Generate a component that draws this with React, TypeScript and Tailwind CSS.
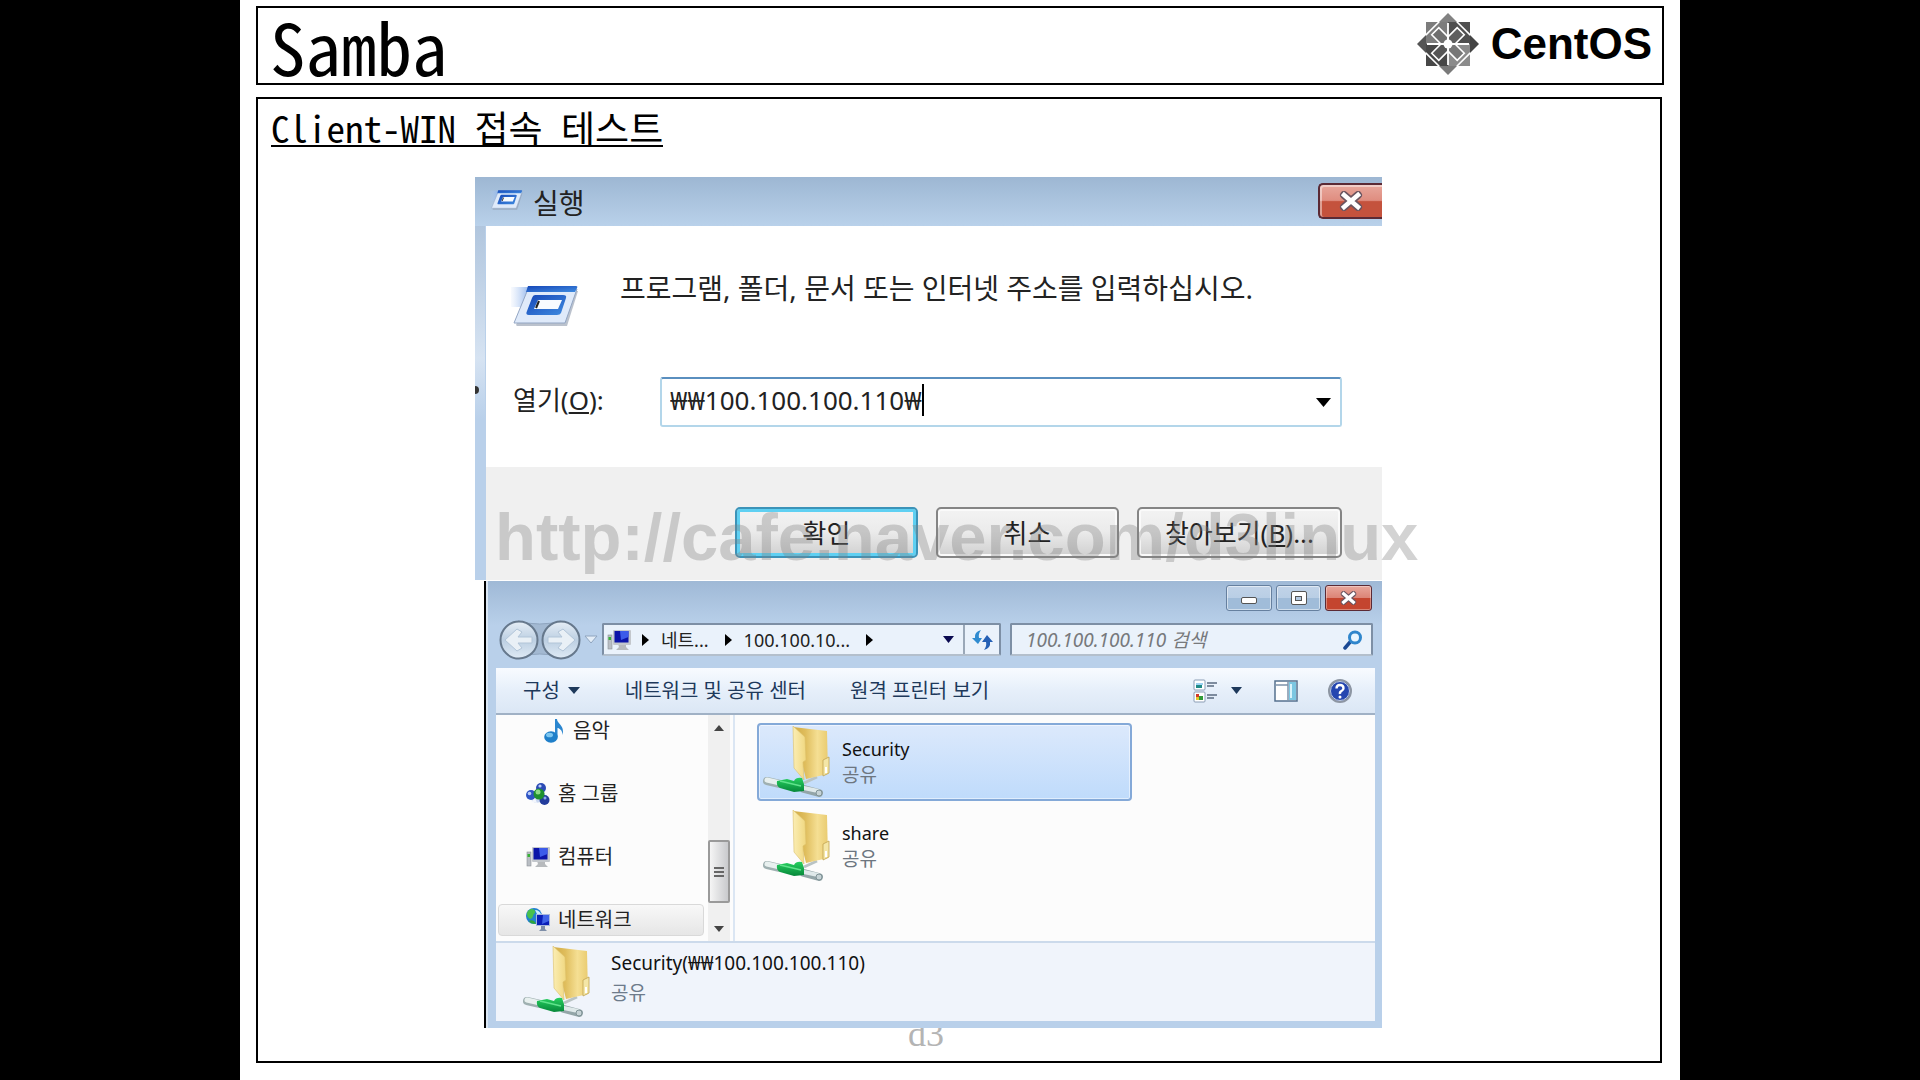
import React from "react";

const MONO = "font-['Noto_Sans_Mono_CJK_KR','Noto_Sans_CJK_KR',monospace]";
const UI = "font-['Noto_Sans','Noto_Sans_CJK_KR',sans-serif]";

function CentosMark() {
  const corners = [
    { x: -22, y: -22, fill: "#7c7c7c" },
    { x: 0, y: -22, fill: "#4f4f4f" },
    { x: 0, y: 0, fill: "#8b8b8b" },
    { x: -22, y: 0, fill: "#474747" },
  ];
  const tips = [
    { d: "M0-31L-9-22H9Z", fill: "#828282" },
    { d: "M31 0L22-9V9Z", fill: "#444444" },
    { d: "M0 31L9 22H-9Z", fill: "#7a7a7a" },
    { d: "M-31 0L-22-9V9Z", fill: "#555555" },
  ];
  const bands = [
    { angle: -45, fill: "#6f6f6f" },
    { angle: 45, fill: "#5f5f5f" },
    { angle: 135, fill: "#777777" },
    { angle: 225, fill: "#565656" },
  ];
  return (
    <svg viewBox="-31 -31 62 62" className="size-[62px]" aria-hidden="true">
      {corners.map((c) => (
        <rect key={`${c.x}${c.y}`} x={c.x} y={c.y} width="22" height="22" fill={c.fill} />
      ))}
      {tips.map((p) => (
        <path key={p.d} d={p.d} fill={p.fill} />
      ))}
      {bands.map((b) => (
        <g key={b.angle} transform={`rotate(${b.angle})`} stroke="#fff" strokeWidth="1.6">
          <path d="M-9.500-22H9.500" />
          <path d="M0 0L-5-5V-18H5V-5Z" fill={b.fill} />
        </g>
      ))}
      <path d="M-21 0H21M0-21V21" stroke="#fff" strokeWidth="1.8" />
      <circle r="4.500" fill="#fff" />
    </svg>
  );
}

function RunIcon({ className }: { className: string }) {
  return (
    <svg viewBox="0 0 68 42" className={className} aria-hidden="true">
      <defs>
        <linearGradient id="runBlue" x1="0" y1="0" x2="1" y2="1">
          <stop offset="0" stopColor="#1647b8" />
          <stop offset="1" stopColor="#3f8be0" />
        </linearGradient>
        <linearGradient id="runTrail">
          <stop offset="0" stopColor="#b9d0f5" stopOpacity="0.1" />
          <stop offset="1" stopColor="#86aeea" />
        </linearGradient>
      </defs>
      <path d="M0 2H20L13 22H0Z" fill="url(#runTrail)" />
      <path d="M5 40L20 6H67L56 41H6Z" fill="#8d99ab" opacity="0.6" />
      <path d="M3 38L17 4H66L54 38Z" fill="#dfeafa" stroke="#93a6c4" />
      <path d="M17 1H65Q67 1 66 3L64 7H15Z" fill="url(#runBlue)" />
      <path d="M24 10H52Q56 10 55 13L50 28Q49 30 46 30H18Q14 30 16 26L21 13Q22 10 24 10Z" fill="url(#runBlue)" />
      <path d="M27 15H51L47 24H23Z" fill="#f8fbff" />
      <path d="M28 16L25 23" stroke="#222" strokeWidth="2" />
    </svg>
  );
}

function CloseGlyph({ className }: { className: string }) {
  return (
    <svg viewBox="0 0 24 20" className={className} aria-hidden="true">
      <path d="M5 4L19 16M19 4L5 16" stroke="#6b5560" strokeWidth="8" strokeLinecap="round" />
      <path d="M5 4L19 16M19 4L5 16" stroke="#fff" strokeWidth="4.500" strokeLinecap="square" />
    </svg>
  );
}

function Triangle({ className, dir = "down" }: { className: string; dir?: "down" | "right" | "up" }) {
  const d = dir === "down" ? "M0 0H10L5 10Z" : dir === "right" ? "M0 0L10 5L0 10Z" : "M0 10L5 0L10 10Z";
  return (
    <svg viewBox="0 0 10 10" preserveAspectRatio="none" className={className} aria-hidden="true">
      <path d={d} fill="currentColor" />
    </svg>
  );
}

function ComputerIcon() {
  return (
    <svg viewBox="0 0 24 22" className="h-[22px] w-6 shrink-0" aria-hidden="true">
      <rect x="1" y="6" width="4" height="14" fill="#b9bec4" stroke="#8c9298" strokeWidth="0.6" />
      <rect x="1.500" y="8" width="2.500" height="3" fill="#36b135" />
      <path d="M11 15H19V18L22 21H9L12 18Z" fill="#b7babd" />
      <rect x="6" y="1" width="18" height="15" rx="1" fill="#c3c7cc" />
      <rect x="7.500" y="2" width="14" height="11.500" fill="#0c14a8" />
      <path d="M13 2H21.500V8L14 11Z" fill="#3c5bea" />
    </svg>
  );
}

function MusicIcon() {
  return (
    <svg viewBox="0 0 20 24" className="h-6 w-5 shrink-0" aria-hidden="true">
      <path d="M11 0H13C13 5 21 6 18.500 16C18.500 11 15 9 13.500 9V18H11Z" fill="#2b86cf" />
      <ellipse cx="7" cy="18" rx="6.800" ry="5.800" fill="#1f7fc9" />
      <ellipse cx="5.500" cy="16" rx="3.500" ry="2.300" fill="#7cc6f0" />
    </svg>
  );
}

function HomegroupIcon() {
  return (
    <svg viewBox="0 0 24 22" className="h-[22px] w-6 shrink-0" aria-hidden="true">
      <path d="M3 15L15 2L22 18L9 20Z" fill="#c8d6f0" />
      <circle cx="15" cy="5" r="5" fill="#2b4bb5" />
      <circle cx="5" cy="12" r="5" fill="#2f55c4" />
      <circle cx="18.500" cy="17" r="5" fill="#233c9c" />
      <circle cx="13" cy="11" r="5.500" fill="#1f9130" />
      <circle cx="12" cy="9" r="2.500" fill="#8fdd86" />
      <circle cx="14" cy="3" r="1.600" fill="#b9cdf8" />
      <circle cx="3.500" cy="10.500" r="1.800" fill="#b9cdf8" />
      <circle cx="19" cy="15" r="1.500" fill="#8ea9ec" />
      <path d="M5 19L9 15L11 20Z" fill="#f3f6fc" />
    </svg>
  );
}

function NetworkIcon() {
  return (
    <svg viewBox="0 0 24 24" className="size-6 shrink-0" aria-hidden="true">
      <circle cx="8" cy="8" r="8" fill="#2280d0" />
      <path d="M2 3C6-1 10 2 9 5C6 7 8 10 4 11C1 9 0 6 2 3Z" fill="#48c04c" />
      <path d="M3 13C6 11 9 13 10 16C6 16 4 15 3 13Z" fill="#2ea53a" />
      <path d="M9 2C12 2 14 4 15 6H11Z" fill="#c9ecff" />
      <rect x="10" y="6" width="14" height="12" fill="#a8b8dc" />
      <rect x="11" y="7" width="12" height="10" fill="#0b1fb8" />
      <path d="M17 7H23V13L16 16Z" fill="#3f63e8" />
      <path d="M15 18H19V21L21 23H13L15 21Z" fill="#7e8ea8" />
    </svg>
  );
}

function SharedFolder() {
  return (
    <svg viewBox="0 0 68 72" className="h-[72px] w-[68px] shrink-0" aria-hidden="true">
      <defs>
        <linearGradient id="folderBack">
          <stop offset="0" stopColor="#d0aa45" />
          <stop offset="0.35" stopColor="#dfbd5c" />
          <stop offset="0.7" stopColor="#f5df93" />
          <stop offset="1" stopColor="#e9cb70" />
        </linearGradient>
        <linearGradient id="folderFront">
          <stop offset="0" stopColor="#fbeeb4" />
          <stop offset="1" stopColor="#f0d77f" />
        </linearGradient>
        <linearGradient id="cable" x1="0" y1="0" x2="0" y2="1">
          <stop offset="0" stopColor="#27d05f" />
          <stop offset="1" stopColor="#06873a" />
        </linearGradient>
      </defs>
      <path d="M41 57L54 51" stroke="#b9c3c4" strokeWidth="3" />
      <path d="M30 1L64 5L65 48L43 53Z" fill="url(#folderBack)" />
      <path d="M60 34L66 31V47L60 50Z" fill="#f4e6a6" stroke="#c2a350" strokeWidth="0.800" />
      <rect x="62" y="41" width="2" height="6" fill="#fff" />
      <path d="M30 0L42 11L43 34L40 36L41 54L31 42Z" fill="url(#folderFront)" stroke="#dcc06a" strokeWidth="0.600" />
      <path d="M4 55L17 58" stroke="#9fb0b1" strokeWidth="8" strokeLinecap="round" />
      <path d="M4 54L17 57" stroke="#e8f0ef" strokeWidth="5" strokeLinecap="round" />
      <path d="M41 63L56 67" stroke="#93a5a8" strokeWidth="8" strokeLinecap="round" />
      <path d="M41 62L55 65" stroke="#dfe9ea" strokeWidth="4" strokeLinecap="round" />
      <circle cx="56" cy="67" r="3" fill="#c6d3d6" stroke="#7f9296" />
      <path d="M14 55L24 53L31 55Q33 51 39 52L41 58V65L31 66L17 62Q13 60 14 55Z" fill="url(#cable)" />
      <path d="M17 55L38 60" stroke="#5fe38b" strokeWidth="1.500" />
    </svg>
  );
}

function RunDialog() {
  const buttonBase =
    "relative rounded-[5px] border-2 h-[51px] text-[26px] leading-none text-[#222] bg-linear-to-b from-[#f3f3f3] from-0% via-[#ebebeb] via-48% to-[#d0d0d0] to-100%";
  return (
    <section aria-label="실행" className="relative bg-[#b9d0ea] pl-[11px]">
      <div className="absolute inset-y-0 left-0 w-[10px] bg-linear-to-b from-[#a3bbd6] from-0% via-[#d6e3f2] via-45% to-[#b9d0ea] to-60%" />
      <span className="absolute left-0 top-[209px] h-2 w-1 rounded-r bg-[#333]" />
      <header className="relative -ml-[11px] flex h-[49px] items-start bg-linear-to-b from-[#9db7d3] to-[#b9d1ea] pl-[15px]">
        <RunIcon className="mt-3 h-[22px] w-[33px]" />
        <h2 className="ml-[10px] mt-3 text-[28px] leading-7 text-[#222]">실행</h2>
        <button
          aria-label="닫기"
          className="ml-auto mt-[6px] flex h-9 w-16 items-center justify-center rounded-l-[5px] border-2 border-r-0 border-[#5b2a35] bg-linear-to-b from-[#e8a79c] from-0% via-[#df8d80] via-48% to-[#c4523d] to-52% shadow-[inset_1px_1px_0_1px_rgba(255,255,255,0.45)]"
        >
          <CloseGlyph className="h-5 w-6" />
        </button>
      </header>
      <div className="bg-white pb-10">
        <div className="flex pl-[25px] pt-[46px]">
          <RunIcon className="mt-[13px] h-[42px] w-[68px]" />
          <p className="ml-[41px] text-[28px] leading-8 text-[#222]">프로그램, 폴더, 문서 또는 인터넷 주소를 입력하십시오.</p>
        </div>
        <div className="mt-[50px] flex items-center pl-[27px] pr-10">
          <label htmlFor="run-open" className="w-[147px] pb-1 text-[26px] leading-8 text-[#222]">
            열기(<span className="underline underline-offset-2">O</span>):
          </label>
          <div className="flex h-[50px] flex-1 items-center rounded-[3px] border-2 border-[#b3d6ea] border-t-[#5a8fbf] bg-white pl-2">
            <input
              id="run-open"
              defaultValue="₩₩100.100.100.110₩"
              className="h-10 bg-transparent pb-1 text-[26px] leading-9 text-[#222] outline-none [field-sizing:content]"
            />
            <span className="mb-1 h-8 w-[2px] bg-black" />
            <button aria-label="목록 열기" className="ml-auto mr-[9px] text-black">
              <Triangle className="h-[9px] w-[15px]" />
            </button>
          </div>
        </div>
      </div>
      <footer className="flex h-[113px] items-start justify-end gap-[18px] bg-[#f0f0f0] pr-10 pt-10">
        <button className={`${buttonBase} w-[183px] border-[#3c93b8] shadow-[inset_0_0_0_3px_#5fd0f2]`}>확인</button>
        <button className={`${buttonBase} w-[183px] border-[#858585] shadow-[inset_0_0_0_2px_#fafafa]`}>취소</button>
        <button className={`${buttonBase} w-[205px] border-[#858585] shadow-[inset_0_0_0_2px_#fafafa]`}>
          찾아보기(<span className="underline underline-offset-2">B</span>)...
        </button>
      </footer>
    </section>
  );
}

function NavArrows() {
  return (
    <div className="flex items-center">
      <svg viewBox="0 0 84 42" className="h-[42px] w-[84px]" aria-hidden="true">
        <defs>
          <linearGradient id="orb" x1="0" y1="0" x2="0" y2="1">
            <stop offset="0" stopColor="#e6eef6" />
            <stop offset="0.5" stopColor="#bccfe2" />
            <stop offset="1" stopColor="#dfeaf5" />
          </linearGradient>
        </defs>
        <path d="M20 2Q42 8 63 2V38Q42 32 20 38Z" fill="#a3b9d2" stroke="#8fa5bf" />
        <circle cx="21" cy="21" r="18.500" fill="url(#orb)" stroke="#66788c" strokeWidth="2" />
        <circle cx="63" cy="21" r="18.500" fill="url(#orb)" stroke="#66788c" strokeWidth="2" />
        <path d="M7 21L19 10L24 13L20 18H34V24H20L24 29L19 32Z" fill="#e9f0f6" stroke="#b2c5d8" />
        <path d="M77 21L65 10L60 13L64 18H50V24H64L60 29L65 32Z" fill="#e9f0f6" stroke="#b2c5d8" />
      </svg>
      <svg viewBox="0 0 14 10" className="ml-[2px] h-[10px] w-[14px]" aria-hidden="true">
        <path d="M1 1H13L7 8Z" fill="#e3edf7" stroke="#8fa5bf" />
      </svg>
    </div>
  );
}

const navItems = [
  { label: "음악", icon: <MusicIcon />, row: "border-transparent pl-[45px] gap-[9px]" },
  { label: "홈 그룹", icon: <HomegroupIcon />, row: "border-transparent pl-[27px] gap-[8px]" },
  { label: "컴퓨터", icon: <ComputerIcon />, row: "border-transparent pl-[27px] gap-[8px]" },
  { label: "네트워크", icon: <NetworkIcon />, row: "pl-[27px] gap-[8px] rounded-[4px] border-[#d9d9d9] bg-linear-to-b from-[#f8f8f8] to-[#e6e6e6]" },
];

const shares = [
  { name: "Security", row: "border-[#84a9d8] bg-linear-to-b from-[#dce9fc] to-[#bfdbfb] shadow-[inset_0_0_0_1px_rgba(255,255,255,0.5)]" },
  { name: "share", row: "border-transparent" },
];

function Explorer() {
  const frameButton =
    "flex h-[26px] items-center justify-center rounded-[3px] border border-[#66809f] bg-linear-to-b from-[#c1d3e8] from-0% via-[#b9cee5] via-48% to-[#a0bcd9] to-52% shadow-[inset_0_0_0_1px_rgba(255,255,255,0.5)]";
  return (
    <section aria-label="100.100.100.110" className="ml-[9px] mt-px border-l-2 border-black bg-[#b9d0ea]">
      <div className="border-l-2 border-[#dbe7f4] bg-linear-to-b from-[#9fb9d6] from-0% to-[#b9d0ea] to-10% pb-[7px] pl-2 pr-[7px]">
        <div className="flex justify-end gap-1 pr-[3px] pt-1">
          <button aria-label="최소화" className={`${frameButton} w-[46px]`}>
            <span className="mt-1 h-[7px] w-4 rounded-[2px] border border-[#555] bg-white" />
          </button>
          <button aria-label="최대화" className={`${frameButton} w-[45px]`}>
            <span className="flex h-[14px] w-4 items-center justify-center rounded-[2px] border border-[#555] bg-white">
              <span className="h-[5px] w-[7px] border border-[#555] bg-[#b4cae2]" />
            </span>
          </button>
          <button
            aria-label="닫기"
            className="flex h-[26px] w-[47px] items-center justify-center rounded-[3px] border border-[#5b2a35] bg-linear-to-b from-[#e8a79c] from-0% via-[#dc8577] via-48% to-[#c4452f] to-52% shadow-[inset_0_0_0_1px_rgba(255,255,255,0.35)]"
          >
            <CloseGlyph className="h-[14px] w-[17px]" />
          </button>
        </div>
        <div className="flex h-[57px] items-center pl-[2px] pr-[2px]">
          <NavArrows />
          <div className="ml-1 flex h-[33px] min-w-0 flex-[392] items-center rounded-[2px] border-2 border-[#7d8fa5] border-b-[#b3bfcc] bg-[#eaf2fb] pl-[3px] text-[18px] leading-none text-[#222]">
            <ComputerIcon />
            <Triangle dir="right" className="ml-[11px] h-3 w-[7px] text-black" />
            <span className="ml-3 whitespace-nowrap">네트...</span>
            <Triangle dir="right" className="ml-4 h-3 w-[7px] text-black" />
            <span className="ml-3 whitespace-nowrap">100.100.10...</span>
            <Triangle dir="right" className="ml-4 h-3 w-[7px] text-black" />
            <button aria-label="이전 위치" className="ml-auto mr-[9px] text-[#0a0a50]">
              <Triangle className="h-[7px] w-[11px]" />
            </button>
            <button aria-label="새로 고침" className="flex h-full w-9 items-center justify-center border-l-2 border-[#9aa8b8]">
              <svg viewBox="0 0 22 20" className="h-5 w-[22px]" aria-hidden="true">
                <path d="M10 0Q3 2 4 8L1 8L7 14L11 8H8Q7 4 10 0Z" fill="#2f8bd0" />
                <path d="M13 20Q20 18 19 12H22L16 5L11 12H15Q16 16 13 20Z" fill="#2560b5" />
              </svg>
            </button>
          </div>
          <div className="ml-[9px] flex h-[33px] min-w-0 flex-[337] items-center rounded-[2px] border-2 border-[#7d8fa5] border-b-[#b3bfcc] bg-[#eaf2fb] pl-[14px] pr-2">
            <input
              aria-label="검색"
              placeholder="100.100.100.110 검색"
              className="min-w-0 flex-1 bg-transparent text-[19px] italic leading-6 outline-none placeholder:text-[#77797c]"
            />
            <svg viewBox="0 0 20 20" className="size-5" aria-hidden="true">
              <path d="M2 18L8 11" stroke="#1c4a94" strokeWidth="3.500" strokeLinecap="round" />
              <circle cx="12" cy="7.500" r="5.500" fill="#e9f6ff" stroke="#2f86cc" strokeWidth="3" />
            </svg>
          </div>
        </div>
        <div className="flex h-[47px] items-center border-b-2 border-[#a0b1c5] bg-linear-to-b from-[#f8fbff] from-0% via-[#e6effa] via-50% to-[#dbe7f5] to-100% pl-[27px] pr-[23px] text-[20px] leading-none text-[#1e395b]">
          <button className="flex items-center gap-2 whitespace-nowrap">
            구성
            <Triangle className="h-[7px] w-3" />
          </button>
          <button className="ml-[45px] whitespace-nowrap">네트워크 및 공유 센터</button>
          <button className="ml-[44px] whitespace-nowrap">원격 프린터 보기</button>
          <button aria-label="보기 변경" className="ml-auto flex items-center gap-[14px]">
            <svg viewBox="0 0 24 24" className="size-6" aria-hidden="true">
              <rect x="1" y="1" width="11" height="10" rx="1" fill="#fff" stroke="#8a9db5" />
              <path d="M3 9V6H9V9Z" fill="#1f8a86" />
              <path d="M3 4H10V6H3Z" fill="#9ed2f2" />
              <rect x="1" y="13" width="11" height="10" rx="1" fill="#fff" stroke="#8a9db5" />
              <path d="M3 15H6V18H3Z" fill="#d23a2a" />
              <path d="M6 17H10V21H6Z" fill="#2f9b37" />
              <path d="M3 18H6V21H3Z" fill="#e3c52c" />
              <path d="M14 4H24M14 7H21M14 16H24M14 19H21" stroke="#5b6b80" strokeWidth="1.500" />
            </svg>
            <Triangle className="h-[7px] w-[11px]" />
          </button>
          <button aria-label="미리 보기 창" className="ml-8">
            <svg viewBox="0 0 24 22" className="h-[22px] w-6" aria-hidden="true">
              <rect x="1" y="1" width="22" height="20" fill="#fff" stroke="#55718f" strokeWidth="1.500" />
              <path d="M1 5H14M14 1V21" stroke="#7d93ab" strokeWidth="1.500" />
              <rect x="15" y="2" width="7" height="18" fill="#7cc7e2" />
              <path d="M17 4V18" stroke="#d9f3fb" strokeWidth="2" />
            </svg>
          </button>
          <button aria-label="도움말" className="ml-[30px]">
            <svg viewBox="0 0 24 24" className="size-6" aria-hidden="true">
              <circle cx="12" cy="12" r="11" fill="#2546b0" stroke="#8d96a3" strokeWidth="2" />
              <circle cx="12" cy="12" r="9.500" fill="none" stroke="#c3cede" />
              <path d="M8.500 9.500Q8.500 6 12 6T15.500 9.300Q15.500 11 13.500 12T12 15" fill="none" stroke="#fff" strokeWidth="2.400" />
              <circle cx="12" cy="18" r="1.500" fill="#fff" />
            </svg>
          </button>
        </div>
        <div className="flex h-[226px] bg-[#fcfcfc]">
          <nav className="flex w-[212px] flex-col gap-[31px] overflow-hidden pl-[2px] pr-1 text-[20px] leading-none text-[#222]">
            {navItems.map((item) => (
              <a key={item.label} href="#" className={`flex h-8 shrink-0 items-center border ${item.row}`}>
                {item.icon}
                {item.label}
              </a>
            ))}
          </nav>
          <div className="flex w-[22px] flex-col items-center bg-[#f0f0f0] pb-[9px] pt-[10px] text-[#444]">
            <Triangle dir="up" className="h-[6px] w-[10px]" />
            <div className="mt-[109px] flex h-[63px] w-[22px] flex-col items-center justify-center gap-[2px] rounded-[2px] border-2 border-[#9a9a9a] bg-linear-to-r from-[#f5f5f5] to-[#c9cacd]">
              <span className="h-[2px] w-[10px] bg-[#666]" />
              <span className="h-[2px] w-[10px] bg-[#666]" />
              <span className="h-[2px] w-[10px] bg-[#666]" />
            </div>
            <Triangle className="mt-auto h-[6px] w-[10px]" />
          </div>
          <ul className="ml-[3px] flex-1 border-l-2 border-[#dbe6f3] pl-[22px] pt-2">
            {shares.map((share) => (
              <li key={share.name} className={`mb-[6px] flex h-[78px] w-[375px] items-center rounded-[4px] border-2 pl-1 ${share.row}`}>
                <SharedFolder />
                <div className="ml-[11px]">
                  <p className="text-[18px] leading-[26px] text-[#111]">{share.name}</p>
                  <p className="text-[19px] leading-[26px] text-[#6d7680]">공유</p>
                </div>
              </li>
            ))}
          </ul>
        </div>
        <footer className="flex h-20 items-start border-t-2 border-[#ccdaeb] bg-[#f0f4fb] pl-[27px] pt-[3px]">
          <SharedFolder />
          <div className="ml-5 pt-1">
            <p className="text-[19px] leading-[26px] text-[#111]">Security(₩₩100.100.100.110)</p>
            <p className="mt-1 text-[19px] leading-[26px] text-[#6d7b8b]">공유</p>
          </div>
        </footer>
      </div>
    </section>
  );
}

export default function App() {
  return (
    <div className="min-h-screen bg-black">
      <main className="mx-auto flex min-h-screen w-3/4 flex-col bg-white px-4 pb-[17px] pt-[6px] text-black">
        <header className="flex h-[79px] items-center justify-between border-2 border-black pl-3 pr-[10px]">
          <h1 className={`${MONO} text-[71px] leading-[75px]`}>Samba</h1>
          <div className="mb-1 flex items-center gap-3">
            <CentosMark />
            <span className="font-['Liberation_Sans',sans-serif] text-[44px] font-bold leading-none">CentOS</span>
          </div>
        </header>
        <section className="relative isolate mr-[2px] mt-3 flex-1 border-2 border-black">
          <h2 className={`${MONO} ml-[13px] mt-2 h-[50px] w-fit text-[37px] leading-10`}>
            <span className="inline-block h-10 border-b-2 border-black">Client-WIN 접속 테스트</span>
          </h2>
          <p className="absolute bottom-[7px] left-0 right-[66px] -z-10 text-center font-['Liberation_Serif',serif] text-[36px] leading-10 text-[#b4b4b4]">
            d3
          </p>
          <div className={`${UI} relative ml-[217px] mr-[278px] mt-5`}>
            <RunDialog />
            <Explorer />
            <p className="pointer-events-none absolute left-5 top-[324px] whitespace-nowrap font-['Liberation_Sans',sans-serif] text-[67px] font-bold leading-[72px] text-[#808080]/35">
              http://cafe.naver.com/d3linux
            </p>
          </div>
        </section>
      </main>
    </div>
  );
}
